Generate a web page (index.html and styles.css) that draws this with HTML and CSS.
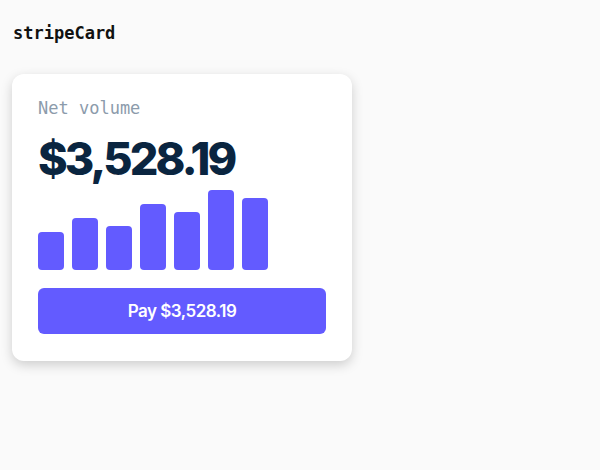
FILE: index.html
```html
<!DOCTYPE html>
<html lang="en">
<head>
    <meta charset="UTF-8">
    <meta name="viewport" content="width=device-width, initial-scale=1.0">
    <title>stripeCard</title>
    <link rel="stylesheet" href="styles.css">
</head>
<body>
    <h1 class="title">stripeCard</h1>

    <!-- Card -->
    <div class="card">
        <p class="label">Net volume</p>
        <p class="amount">$3,528.19</p>

        <!-- Chart -->
        <div class="bars">
            <div class="bar" style="height: 38px"></div>
            <div class="bar" style="height: 52px"></div>
            <div class="bar" style="height: 44px"></div>
            <div class="bar" style="height: 66px"></div>
            <div class="bar" style="height: 58px"></div>
            <div class="bar" style="height: 80px"></div>
            <div class="bar" style="height: 72px"></div>
        </div>

        <button class="btn">Pay $3,528.19</button>
    </div>
</body>
</html>
```

FILE: styles.css
```css
body {
    margin: 0;
    padding: 22px 12px;
    background-color: #fafafa;
    font-family: Inter, sans-serif;
}
.title {
    margin: 0 0 0 1px;
    font-family: "DejaVu Sans Mono", monospace;
    font-size: 17px;
    font-weight: bold;
    line-height: 22px;
    color: #111111;
}
.card {
    width: 340px;
    box-sizing: border-box;
    margin-top: 30px;
    padding: 22px 26px 27px;
    background-color: #ffffff;
    border-radius: 12px;
    box-shadow: 0 4px 12px rgba(0, 0, 0, 0.18);
}
.label {
    margin: 0;
    font-family: "DejaVu Sans Mono", monospace;
    font-size: 17px;
    line-height: 24px;
    color: #8c9bab;
}
.amount {
    margin: 12px 0 0;
    font-size: 45px;
    font-weight: 800;
    line-height: 54px;
    letter-spacing: -2.9px;
    color: #0a2540;
}
.bars {
    display: flex;
    align-items: flex-end;
    gap: 8px;
    height: 80px;
    margin-top: 4px;
}
.bar {
    width: 26px;
    background-color: #635bff;
    border-radius: 4px;
}
.btn {
    display: block;
    width: 100%;
    height: 46px;
    margin-top: 18px;
    background-color: #635bff;
    color: white;
    border: none;
    border-radius: 6px;
    font-family: Inter, sans-serif;
    font-size: 17px;
    font-weight: 600;
    letter-spacing: -0.5px;
    cursor: pointer;
}
```
